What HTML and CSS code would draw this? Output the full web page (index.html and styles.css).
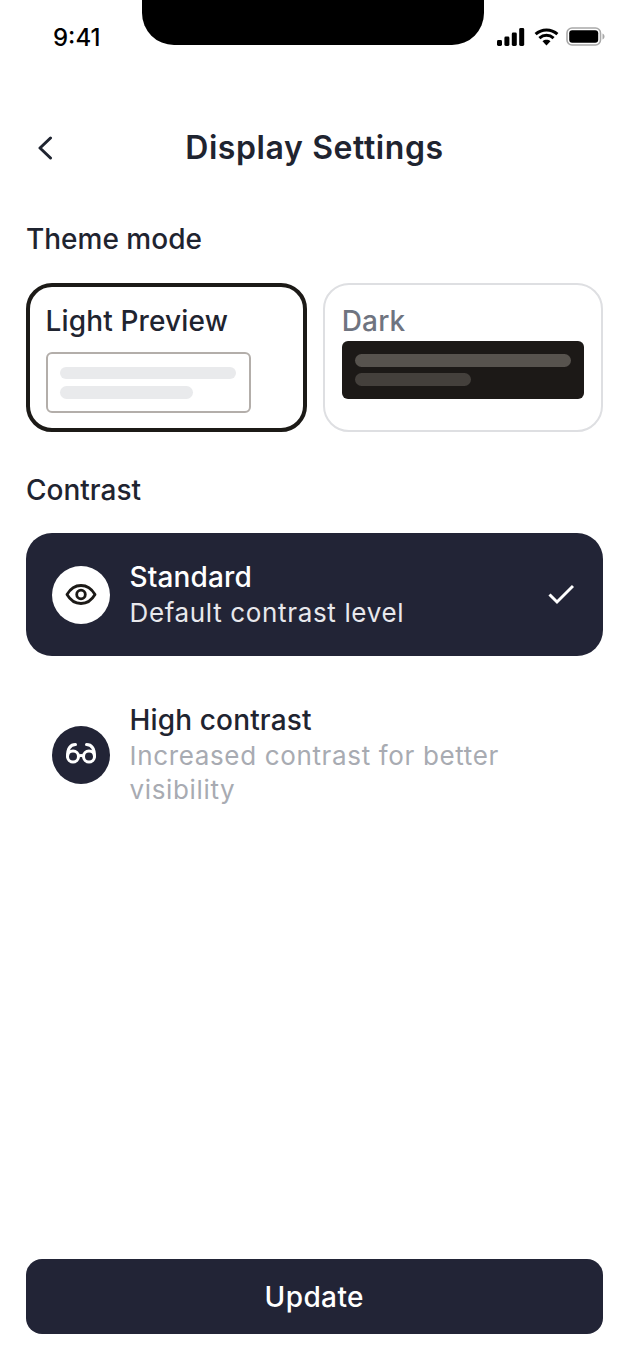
FILE: index.html
```html
<!DOCTYPE html>
<html lang="en">
<head>
<meta charset="utf-8">
<title>Display Settings</title>
<link rel="stylesheet" href="styles.css">
</head>
<body>
<div class="screen">
  <div class="notch"></div>
  <header class="status">
    <span class="time">9:41</span>
    <div class="status-icons">
      <svg class="ic-signal" width="28" height="18" viewBox="0 0 28 18"><rect x="0" y="12" width="5" height="6" rx="1.4"/><rect x="7.4" y="8.5" width="5" height="9.5" rx="1.4"/><rect x="14.8" y="4.5" width="5" height="13.5" rx="1.4"/><rect x="22.2" y="0" width="5" height="18" rx="1.4"/></svg>
      <svg class="ic-wifi" width="25" height="18" viewBox="0 0 26 19"><path d="M1.5 6.5C8 .5 18 .5 24.5 6.5M5.5 10.7C10 6.7 16 6.7 20.5 10.7" fill="none" stroke="#000" stroke-width="3.2"/><path d="M8.8 14 13 18.5 17.2 14C14.8 11.9 11.2 11.9 8.8 14Z"/></svg>
      <svg class="ic-battery" width="39" height="19" viewBox="0 0 39 19"><rect x="1" y="1" width="33.5" height="17" rx="5" fill="none" stroke="#a9a9a9" stroke-width="1.6"/><rect x="3.2" y="3.2" width="29" height="12.6" rx="3"/><path d="M36.5 6.5c1.4.5 2 1.7 2 3s-.6 2.5-2 3z" fill="#a9a9a9"/></svg>
    </div>
  </header>

  <nav class="topbar">
    <svg class="back" width="16" height="24" viewBox="0 0 16 24"><path d="M13.5 2 3 12l10.5 10" fill="none" stroke="#1f2430" stroke-width="3" stroke-linecap="round" stroke-linejoin="round"/></svg>
    <h1 class="title">Display Settings</h1>
  </nav>

  <main class="content">
    <h2 class="label">Theme mode</h2>
    <div class="themes">
      <div class="theme theme-on">
        <div class="theme-name">Light Preview</div>
        <div class="preview preview-light">
          <div class="bar bar-long"></div>
          <div class="bar bar-short"></div>
        </div>
      </div>
      <div class="theme">
        <div class="theme-name theme-name-off">Dark</div>
        <div class="preview preview-dark">
          <div class="bar bar-full"></div>
          <div class="bar bar-half"></div>
        </div>
      </div>
    </div>

    <h2 class="label label-contrast">Contrast</h2>
    <div class="option option-on">
      <div class="badge badge-light">
        <svg width="32" height="24" viewBox="0 0 32 24" fill="none" stroke="#1c1a17" stroke-width="2.8"><path d="M2 11.5C5.5 5.5 10 2.5 16 2.5s10.5 3 14 9c-3.5 6-8 9-14 9S5.5 17.5 2 11.5Z" stroke-linejoin="round"/><circle cx="16" cy="11.5" r="4.3"/></svg>
      </div>
      <div class="option-text">
        <div class="option-title">Standard</div>
        <div class="option-desc option-desc-on">Default contrast level</div>
      </div>
      <svg class="check" width="26" height="22" viewBox="0 0 26 22"><path d="M1.5 10.5 9 18 25 2" fill="none" stroke="#fff" stroke-width="3"/></svg>
    </div>
    <div class="option option-plain">
      <div class="badge badge-dark">
        <svg width="34" height="28" viewBox="0 0 34 28" fill="none" stroke="#fff" stroke-width="3" stroke-linecap="round"><circle cx="9" cy="15.5" r="5.5"/><circle cx="25" cy="15.5" r="5.5"/><path d="M3.5 15.5C3.5 9 5 3.5 11.5 3.5M30.5 15.5C30.5 9 29 3.5 22.5 3.5M14.8 15c1.5-.8 3-.8 4.4 0"/></svg>
      </div>
      <div class="option-text">
        <div class="option-title">High contrast</div>
        <div class="option-desc option-desc-muted">Increased contrast for better visibility</div>
      </div>
    </div>

    <button class="update" type="button">Update</button>
  </main>
</div>
</body>
</html>
```
FILE: styles.css
```css
* { box-sizing: border-box; }

html, body {
  margin: 0;
  padding: 0;
  background: #fff;
}

body {
  font-family: Inter, "Liberation Sans", sans-serif;
  color: #1f2430;
}

.screen {
  position: relative;
  width: 629px;
  height: 1360px;
  display: flex;
  flex-direction: column;
  overflow: hidden;
}

.notch {
  position: absolute;
  left: 142px;
  top: 0;
  width: 342px;
  height: 45px;
  background: #000;
  border-radius: 0 0 32px 32px;
}

/* status bar */
.status {
  height: 74px;
  padding: 23px 24.5px 0 53px;
  display: flex;
  justify-content: space-between;
  align-items: flex-start;
  flex: none;
}

.time {
  font-size: 24px;
  line-height: 29px;
  font-weight: 500;
  color: #000;
}

.status-icons {
  display: flex;
  align-items: center;
  gap: 7px;
  margin-top: 4px;
}

.ic-signal { margin-right: 2px; }

/* navigation */
.topbar {
  position: relative;
  height: 148px;
  flex: none;
  display: flex;
  align-items: center;
  justify-content: center;
}

.back {
  position: absolute;
  left: 37px;
  top: 62px;
}

.title {
  margin: 0;
  font-size: 32px;
  line-height: 40px;
  font-weight: 600;
  letter-spacing: 0.6px;
  color: #1f2430;
}

/* main column */
.content {
  flex: 1;
  padding: 0 26.5px 26px 26px;
  display: flex;
  flex-direction: column;
}

.label {
  margin: 0;
  font-size: 28px;
  line-height: 34px;
  font-weight: 500;
  color: #1f2430;
}

.themes {
  display: flex;
  gap: 16px;
  margin-top: 27px;
}

.theme {
  flex: 1;
  height: 149px;
  padding: 18px 17px 0;
  border: 2px solid #dedfe2;
  border-radius: 26px;
  display: flex;
  flex-direction: column;
  gap: 2px;
}

.theme-on {
  border: 4px solid #1c1a17;
  padding: 16px 15.5px 0;
  gap: 13px;
}

.theme-name {
  font-size: 28px;
  line-height: 36px;
  font-weight: 500;
  letter-spacing: 0.15px;
  color: #1f2430;
}

.theme-name-off {
  color: #6f7480;
}

.preview {
  border-radius: 6px;
  padding: 13px;
  display: flex;
  flex-direction: column;
  gap: 6.5px;
}

.preview-light {
  width: 205px;
  height: 61px;
  padding: 12.5px;
  border: 2px solid #b3aeaa;
}

.preview-dark {
  height: 58px;
  background: #1c1917;
}

.bar {
  height: 13px;
  border-radius: 7px;
}

.preview-light .bar { background: #e9eaec; }
.bar-long { width: 100%; }
.bar-short { width: 133px; }

.bar-full { width: 100%; background: #57534e; }
.bar-half { width: 116px; background: #44403c; }

.label-contrast {
  margin-top: 41px;
}

/* contrast options */
.option {
  margin-top: 26px;
  min-height: 123px;
  padding: 24.5px 29px 24.5px 26px;
  border-radius: 26px;
  display: flex;
  align-items: center;
  gap: 19.5px;
}

.option-plain {
  margin-top: 31.5px;
  padding: 13px 26px;
}

.option-on {
  background: #222436;
  color: #fff;
}

.badge {
  width: 58px;
  height: 58px;
  flex: none;
  border-radius: 50%;
  display: flex;
  align-items: center;
  justify-content: center;
}

.badge-light { background: #fff; }
.badge-dark { background: #222436; }

.option-text {
  flex: 1;
  min-width: 0;
  padding-right: 60px;
  margin-bottom: 2px;
}

.option-title {
  font-size: 28px;
  line-height: 38px;
  font-weight: 500;
  letter-spacing: 0.15px;
}

.option-desc {
  font-size: 26px;
  line-height: 34px;
  font-weight: 400;
  letter-spacing: 0.65px;
}

.option-desc-on {
  color: #e8e8ec;
}

.option-desc-muted {
  color: #a8abb2;
}

.check {
  flex: none;
}

.update {
  margin-top: auto;
  height: 75px;
  border: 0;
  border-radius: 16px;
  background: #222436;
  color: #fff;
  font-family: inherit;
  font-size: 28px;
  font-weight: 500;
  letter-spacing: 0.4px;
}
```
